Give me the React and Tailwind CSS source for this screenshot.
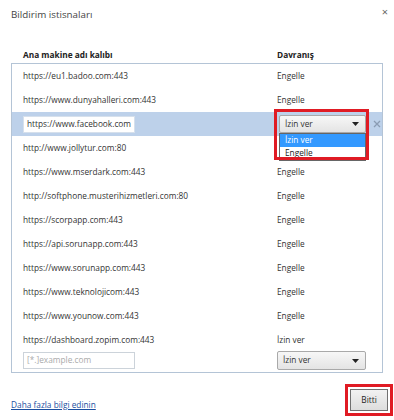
const ROWS = [
  ['https://eu1.badoo.com:443', 'Engelle'],
  ['https://www.dunyahalleri.com:443', 'Engelle'],
  ['https://www.facebook.com', 'İzin ver', true],
  ['http://www.jollytur.com:80', ''],
  ['https://www.mserdark.com:443', 'Engelle'],
  ['http://softphone.musterihizmetleri.com:80', 'Engelle'],
  ['https://scorpapp.com:443', 'Engelle'],
  ['https://api.sorunapp.com:443', 'Engelle'],
  ['https://www.sorunapp.com:443', 'Engelle'],
  ['https://www.teknolojicom:443', 'Engelle'],
  ['https://www.younow.com:443', 'Engelle'],
  ['https://dashboard.zopim.com:443', 'İzin ver'],
]

function Arrow() {
  return (
    <svg width="7" height="4" viewBox="0 0 7 4" className="shrink-0">
      <path d="M0 0h7L3.5 4z" fill="#222" />
    </svg>
  )
}

function SelectBox({ className = '' }) {
  return (
    <div className={`flex items-center justify-between pl-[5px] pr-[6px] border border-[#a9a9a9] rounded-[2px] bg-gradient-to-b from-[#f7f7f7] to-[#e4e4e4] text-[#333] ${className}`}>
      <span>İzin ver</span>
      <Arrow />
    </div>
  )
}

export default function App() {
  return (
    <div className="relative w-[394px] h-[420px] bg-white text-[#333] text-[8.3px] leading-none overflow-hidden" style={{ fontFamily: '"Open Sans", sans-serif' }}>
      <div className="flex items-start justify-between pl-[11px] pr-[6px] pt-[10px]">
        <h1 className="text-[9.8px] text-[#444]">Bildirim istisnaları</h1>
        <span className="text-[11px] text-[#666] -mt-[4px]">×</span>
      </div>

      <div className="flex mt-[31px] pl-[23px] font-bold text-[#222]">
        <div className="w-[254px]">Ana makine adı kalıbı</div>
        <div>Davranış</div>
      </div>

      <div className="mx-[11px] mt-[4px] border border-[#b4c4d6]">
        {ROWS.map(([host, act, sel], i) =>
          sel ? (
            <div key={i} className="relative flex items-center h-[24px] bg-[#bdd1ea]">
              <div className="w-[265px] pl-[11px]">
                <div className="w-[112px] h-[17px] bg-white flex items-center pl-[3px] border border-[#d6e0ec]">{host}</div>
              </div>
              <SelectBox className="w-[87px] h-[18px] ml-[2px]" />
              <svg width="8" height="8" viewBox="0 0 8 8" className="ml-[7px]">
                <path d="M1 1l6 6M7 1L1 7" stroke="#8a9cb3" strokeWidth="1.3" />
              </svg>
              <div className="absolute left-[267px] top-[21px] w-[87px] border border-[#666] bg-white z-10">
                <div className="h-[13px] flex items-center pl-[5px] bg-[#3399ff] text-white">İzin ver</div>
                <div className="h-[13px] flex items-center pl-[5px] text-[#222]">Engelle</div>
              </div>
              <div className="absolute left-[262px] -top-[3px] w-[95px] h-[51px] border-[3px] border-[#e01b24] z-20" />
            </div>
          ) : (
            <div key={i} className="flex items-center h-[24px]">
              <div className="w-[265px] pl-[11px]">{host}</div>
              <div>{act}</div>
            </div>
          )
        )}
        <div className="flex items-start h-[20px]">
          <div className="w-[265px] pl-[11px]">
            <div className="w-[112px] h-[17px] flex items-center pl-[3px] border border-[#ccd3da] text-[#aaa]">[*.]example.com</div>
          </div>
          <SelectBox className="w-[89px] h-[19px] -mt-[1px]" />
        </div>
      </div>

      <div className="flex items-start justify-between pl-[11px] pr-[1px] mt-[11px]">
        <a className="underline text-[#1c4fa0] mt-[17px]">Daha fazla bilgi edinin</a>
        <div className="border-[3px] border-[#e01b24] p-[2px]">
          <div className="w-[38px] h-[22px] flex items-center justify-center border border-[#707070] bg-gradient-to-b from-[#f2f2f2] to-[#dddddd] text-[#222]">Bitti</div>
        </div>
      </div>
    </div>
  )
}
